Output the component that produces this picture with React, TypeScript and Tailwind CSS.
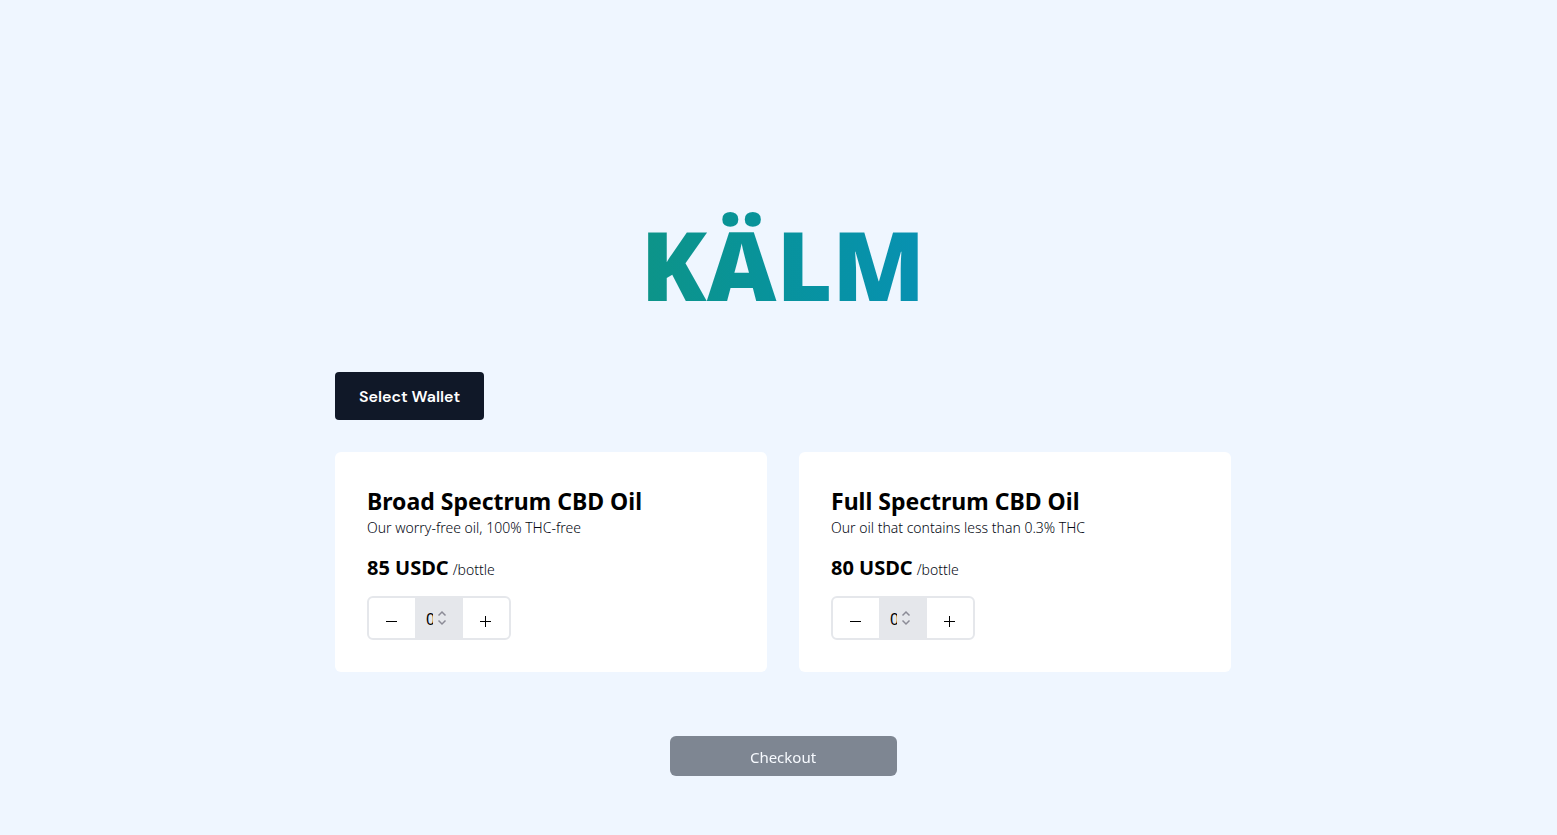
import { useState } from 'react';

type Product = { id: string; name: string; description: string; price: number };

const products: Product[] = [
  { id: 'broad', name: 'Broad Spectrum CBD Oil', description: 'Our worry-free oil, 100% THC-free', price: 85 },
  { id: 'full', name: 'Full Spectrum CBD Oil', description: 'Our oil that contains less than 0.3% THC', price: 80 },
];

function ProductCard({ product, quantity, onChange }: { product: Product; quantity: number; onChange: (n: number) => void }) {
  return (
    <article className="rounded-md bg-white p-8">
      <h2 className="text-[23px] leading-[34px] font-bold text-black">{product.name}</h2>
      <p className="text-sm font-light text-gray-950">{product.description}</p>
      <p className="mt-4 flex items-baseline gap-1 text-xl">
        <span className="font-bold text-black">{product.price} USDC</span>
        <span className="text-sm font-light text-gray-950">/bottle</span>
      </p>
      <div className="mt-3.5 flex h-11 w-36 overflow-hidden rounded-md border-2 border-gray-200">
        <button type="button" aria-label={`Remove one ${product.name}`} className="flex flex-1 items-center justify-center pt-1.5" onClick={() => onChange(Math.max(0, quantity - 1))}>
          <svg viewBox="0 0 12 12" className="size-3" stroke="black" shapeRendering="crispEdges">
            <path d="M0 6.5H11" />
          </svg>
        </button>
        <div className="relative w-12 bg-gray-200">
          <input
            type="number"
            min={0}
            aria-label={`Quantity of ${product.name}`}
            value={quantity}
            onChange={(e) => onChange(Math.max(0, Number(e.target.value)))}
            className="h-full w-[18px] appearance-none overflow-hidden bg-transparent pt-0.5 pl-[11px] text-base text-black outline-none [appearance:textfield] [&::-webkit-inner-spin-button]:appearance-none"
          />
          <svg viewBox="0 0 10 16" className="pointer-events-none absolute left-[22px] top-3 h-4 w-2.5" fill="none" stroke="#8b8b96" strokeWidth="1.5">
            <path d="M1.5 5.5L5 2l3.5 3.5M1.5 10.5L5 14l3.5-3.5" />
          </svg>
        </div>
        <button type="button" aria-label={`Add one ${product.name}`} className="flex flex-1 items-center justify-center pt-1.5" onClick={() => onChange(quantity + 1)}>
          <svg viewBox="0 0 12 12" className="size-3" stroke="black" shapeRendering="crispEdges">
            <path d="M0 6.5H11M5.5 1V12" />
          </svg>
        </button>
      </div>
    </article>
  );
}

export default function App() {
  const [quantities, setQuantities] = useState<Record<string, number>>({ broad: 0, full: 0 });
  const total = Object.values(quantities).reduce((a, b) => a + b, 0);

  return (
    <main className="min-h-screen bg-[#eff6ff] pt-48 pb-14 pl-[9px] font-['Noto_Sans',sans-serif]">
      <div className="mx-auto flex max-w-4xl flex-col">
        <h1 className="self-center bg-linear-to-r from-[#0d9488] to-[#0891b2] bg-clip-text text-8xl leading-36 font-black text-transparent">
          KÄLM
        </h1>
        <button type="button" className="mt-9 h-12 self-start rounded bg-gray-900 px-6 pt-0.5 font-['DM_Sans',Inter,sans-serif] text-base font-semibold text-white">
          Select Wallet
        </button>
        <div className="mt-8 grid grid-cols-2 gap-8">
          {products.map((product) => (
            <ProductCard
              key={product.id}
              product={product}
              quantity={quantities[product.id]}
              onChange={(n) => setQuantities({ ...quantities, [product.id]: n })}
            />
          ))}
        </div>
        <button type="button" disabled={total === 0} className="mt-16 h-10 w-[227px] self-center rounded-md bg-gray-900 pt-0.5 text-[15px] text-white disabled:opacity-50">
          Checkout
        </button>
      </div>
    </main>
  );
}
